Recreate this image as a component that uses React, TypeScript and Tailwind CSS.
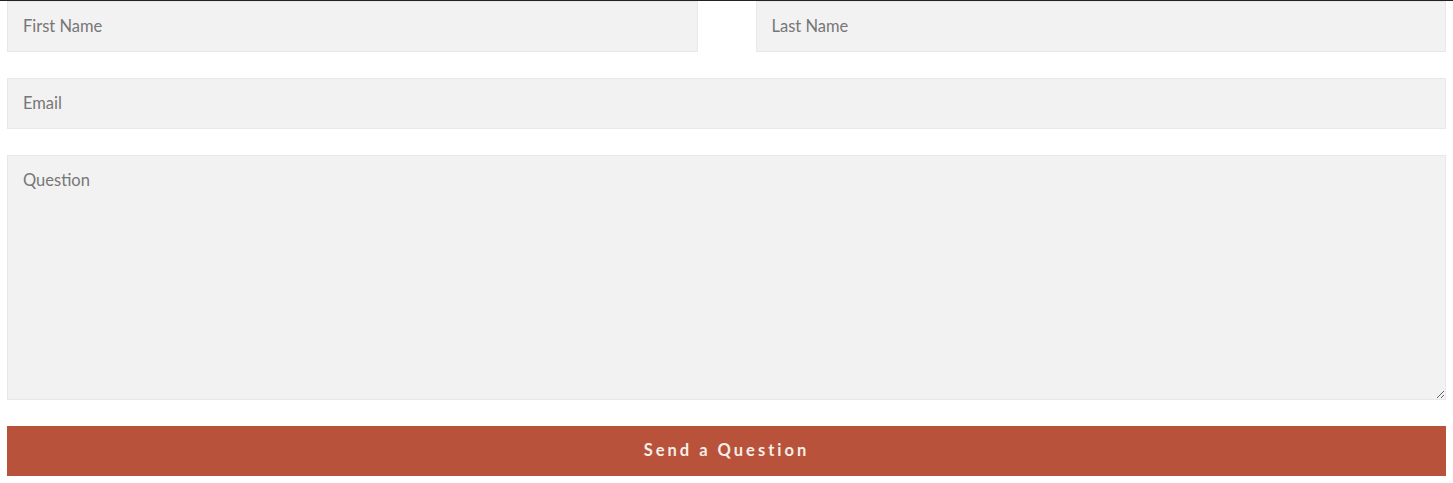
export default function App() {
  const field =
    'block w-full h-[51px] bg-[#f2f2f2] border border-[#e8e8e8] px-[15px] pb-[2px] text-[16.5px] text-[#777] placeholder:text-[#777] outline-none'

  return (
    <div className="min-h-screen bg-white border-t border-[#222] font-['Lato','Noto_Sans',sans-serif]">
      <form className="px-[7px] flex flex-col gap-[26px]" onSubmit={e => e.preventDefault()}>
        <div className="flex gap-[58px]">
          <input className={field} placeholder="First Name" />
          <input className={field} placeholder="Last Name" />
        </div>
        <input className={field} placeholder="Email" />
        <textarea
          className="block w-full h-[245px] bg-[#f2f2f2] border border-[#e8e8e8] px-[15px] pt-[12px] text-[16.5px] text-[#777] placeholder:text-[#777] outline-none"
          placeholder="Question"
        />
        <button
          type="submit"
          className="h-[50px] w-full bg-[#b9523a] text-[#f6eee8] text-[16.5px] font-bold tracking-[3px] pb-[2px]"
        >
          Send a Question
        </button>
      </form>
    </div>
  )
}
